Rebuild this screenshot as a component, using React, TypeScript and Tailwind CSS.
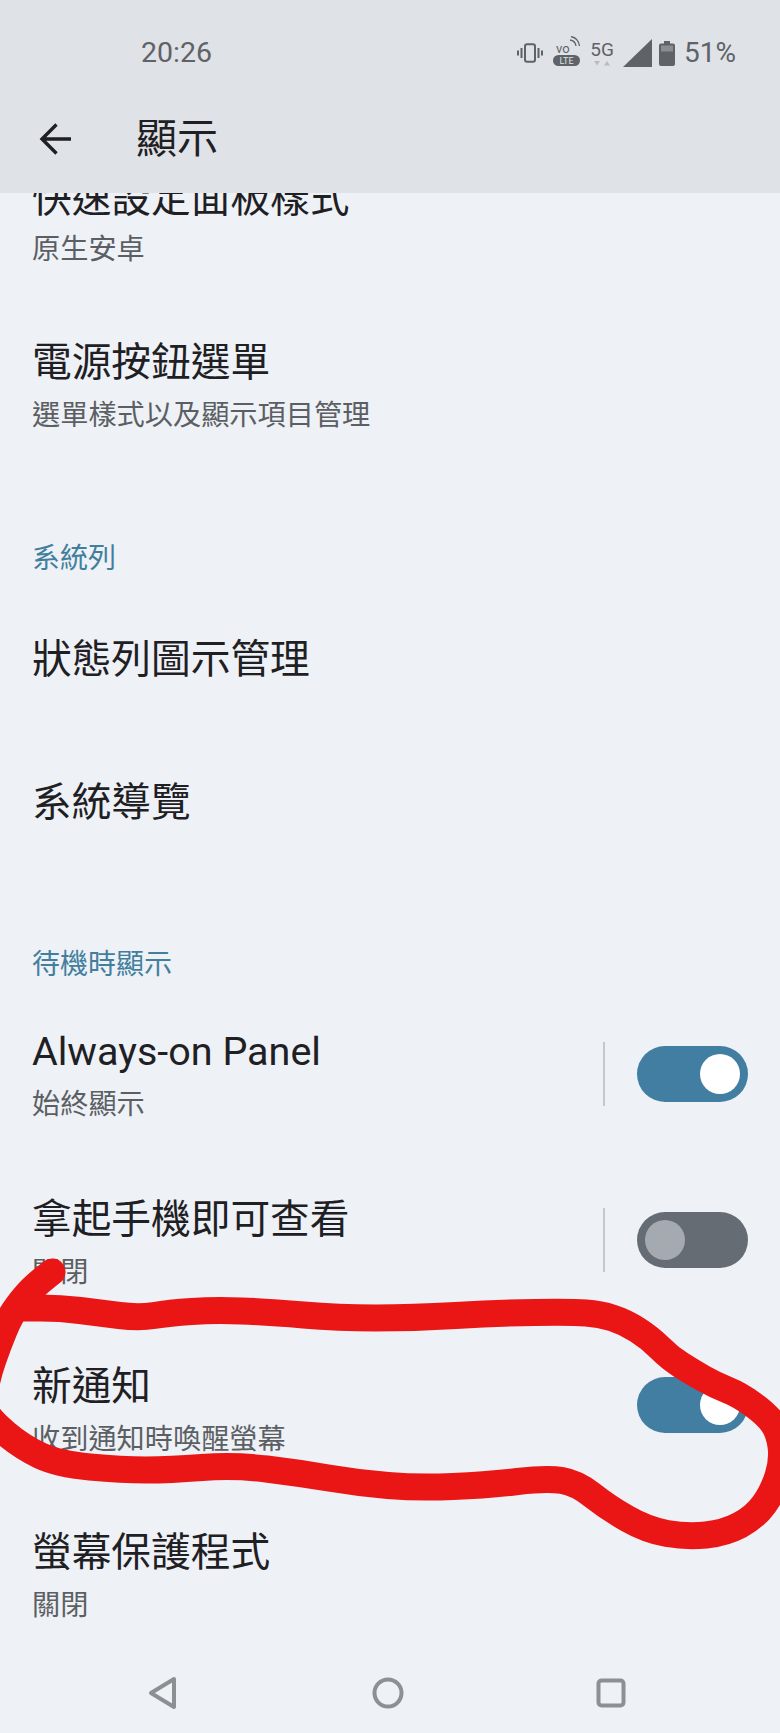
const FONT = "font-['Roboto','Noto_Sans_CJK_TC',sans-serif]";

const PTS: [number, number][] = [
  [52, 1272], [38, 1283], [25, 1296], [10, 1316], [-2, 1345], [-13, 1377], [-17, 1405], [-10, 1420], [22, 1447], [58, 1464],
  [122, 1470], [170, 1470], [234, 1465], [299, 1473], [358, 1483], [418, 1488], [488, 1485], [547, 1478], [577, 1483],
  [607, 1507], [647, 1530], [687, 1537], [725, 1533], [755, 1517], [773, 1492], [783, 1460], [779, 1432], [767, 1415],
  [740, 1395], [715, 1385], [692, 1372], [670, 1358], [650, 1338], [625, 1322], [600, 1314], [572, 1312], [498, 1313], [413, 1318], [338, 1318], [269, 1312],
  [214, 1310], [169, 1313], [139, 1318], [100, 1313], [60, 1308], [22, 1308],
];

function smooth(points: [number, number][]) {
  let d = `M${points[0][0]} ${points[0][1]}`;
  for (let i = 1; i < points.length - 1; i++) {
    const mx = (points[i][0] + points[i + 1][0]) / 2;
    const my = (points[i][1] + points[i + 1][1]) / 2;
    d += ` Q${points[i][0]} ${points[i][1]} ${mx} ${my}`;
  }
  const last = points[points.length - 1];
  return d + ` L${last[0]} ${last[1]}`;
}

function Toggle({ on, divider = true }: { on: boolean; divider?: boolean }) {
  return (
    <div className="flex items-center">
      {divider && <div className="w-[2px] h-[64px] bg-[#c4c7cb]" />}
      <div className={`ml-[32px] w-[111px] h-[56px] rounded-[28px] flex items-center ${on ? "bg-[#417ea2] justify-end pr-[8px]" : "bg-[#666c73] pl-[8px]"}`}>
        <div className={`w-[40px] h-[40px] rounded-full ${on ? "bg-white" : "bg-[#a5aab1]"}`} />
      </div>
    </div>
  );
}

function Row({ title, sub, on, divider, latin, tight, low, h = "h-[166.5px]" }: { title: string; sub: string; on?: boolean; divider?: boolean; latin?: boolean; tight?: boolean; low?: boolean; h?: string }) {
  return (
    <div className={`${h} pl-[32px] pr-[32px] flex items-start justify-between ${latin ? "pt-[29px]" : "pt-[31px]"}`}>
      <div>
        <div className={`leading-[56px] text-[#1e2023] ${tight ? "h-[55px]" : "h-[57px]"} ${latin ? "text-[39.5px]" : "text-[39.7px]"}`}>{title}</div>
        <div className="h-[48px] text-[28.2px] leading-[48px] text-[#5b5f63]">{sub}</div>
      </div>
      {on !== undefined && <div className={latin ? "pt-[18px]" : low ? "pt-[18px]" : "pt-[16px]"}><Toggle on={on} divider={divider} /></div>}
    </div>
  );
}

function Single({ title }: { title: string }) {
  return (
    <div className="h-[143px] pl-[32px] flex items-center text-[39.7px] text-[#1e2023]">{title}</div>
  );
}

function Section({ title, h }: { title: string; h: string }) {
  return (
    <div className={`${h} pl-[32px] flex items-end pb-[10px]`}>
      <div className="text-[28px] leading-[40px] text-[#437f9d]">{title}</div>
    </div>
  );
}

export default function App() {
  return (
    <div className={`relative w-[780px] h-[1733px] overflow-hidden flex flex-col bg-[#eef1f6] ${FONT}`}>
      <header className="relative z-10 h-[193px] shrink-0 bg-[#dfe2e7]">
        <div className="h-[104px] pl-[141px] pr-[44px] flex items-center justify-between pt-[2px]">
          <div className="text-[28.500px] leading-[34px] text-[#5f6266]">20:26</div>
          <div className="flex items-center text-[#5f6266]">
            <svg width="26" height="20" viewBox="0 0 26 20" fill="none">
              <rect x="8" y="1.2" width="10" height="17.6" rx="2" stroke="#5f6266" strokeWidth="2" />
              <path d="M4.5 5v10M1 7.5v5M21.5 5v10M25 7.5v5" stroke="#5f6266" strokeWidth="2" />
            </svg>
            <svg width="28" height="30" viewBox="0 0 28 30" className="ml-[10px] -mt-[4px]">
              <text x="3" y="17" fontSize="13" fill="#5f6266" fontFamily="Roboto">vo</text>
              <path d="M17 4a7 7 0 0 1 6 6M18 0.5a11 11 0 0 1 8.5 9.500" fill="none" stroke="#5f6266" strokeWidth="1.3" />
              <rect x="0" y="19" width="27" height="11" rx="5.500" fill="#5f6266" />
              <text x="13.500" y="28" fontSize="9" fill="#dfe2e7" textAnchor="middle" fontFamily="Roboto">LTE</text>
            </svg>
            <div className="ml-[10px] w-[22px] flex flex-col items-center">
              <div className="text-[19px] leading-[19px] h-[19px]">5G</div>
              <svg width="20" height="6" viewBox="0 0 20 6" className="mt-[1px]">
                <path d="M2 1h6L5 5.500zM12 5.500h6L15 1z" fill="#b9bcc0" />
              </svg>
            </div>
            <svg width="29" height="28" viewBox="0 0 29 28" className="ml-[10px]">
              <path d="M29 0V28H0Z" fill="#5f6266" />
            </svg>
            <svg width="16" height="25" viewBox="0 0 16 25" className="ml-[7px]">
              <path d="M5 0h6v2.500h3a2 2 0 0 1 2 2V23a2 2 0 0 1-2 2H2a2 2 0 0 1-2-2V4.500a2 2 0 0 1 2-2h3z" fill="#5f6266" />
              <rect x="2" y="4.500" width="12" height="6" fill="#8a8d91" />
            </svg>
            <div className="ml-[9px] text-[28px] leading-[34px]">51%</div>
          </div>
        </div>
        <div className="h-[89px] flex items-start">
          <svg width="34" height="32" viewBox="0 0 34 32" fill="none" className="ml-[39px] mt-[19px]">
            <path d="M32 16H3M17.500 1.500L3 16l14.500 14.500" stroke="#1e2023" strokeWidth="3.400" />
          </svg>
          <div className="ml-[63px] text-[41px] leading-[70px] text-[#1e2023]">顯示</div>
        </div>
      </header>

      <main className="flex-1 overflow-hidden">
        <div className="-mt-[53px]">
          <Row title="快速設定面板樣式" sub="原生安卓" h="h-[164px]" tight />
          <Row title="電源按鈕選單" sub="選單樣式以及顯示項目管理" />
          <Section title="系統列" h="h-[118px]" />
          <Single title="狀態列圖示管理" />
          <Single title="系統導覽" />
          <Section title="待機時顯示" h="h-[120px]" />
          <Row title="Always-on Panel" sub="始終顯示" on={true} latin />
          <Row title="拿起手機即可查看" sub="關閉" on={false} />
          <Row title="新通知" sub="收到通知時喚醒螢幕" on={true} divider={false} low />
          <Row title="螢幕保護程式" sub="關閉" />
        </div>
      </main>

      <nav className="absolute z-10 bottom-0 left-0 right-0 h-[80px] bg-[#eef1f6] flex items-center">
        <svg width="32" height="34" viewBox="0 0 32 34" fill="none" className="ml-[147px]">
          <path d="M27 3 L4 17 L27 31 Z" stroke="#8d9093" strokeWidth="4" strokeLinejoin="round" />
        </svg>
        <svg width="32" height="32" viewBox="0 0 32 32" fill="none" className="ml-[193px]">
          <circle cx="16" cy="16" r="13.500" stroke="#8d9093" strokeWidth="4" />
        </svg>
        <svg width="30" height="30" viewBox="0 0 30 30" fill="none" className="ml-[192px]">
          <rect x="2.500" y="2.500" width="25" height="25" rx="3" stroke="#8d9093" strokeWidth="4" />
        </svg>
      </nav>

      <svg className="absolute z-20 inset-0 pointer-events-none" width="780" height="1733" viewBox="0 0 780 1733" fill="none">
        <path d={smooth(PTS)} stroke="#ea1616" strokeWidth="27" strokeLinecap="round" strokeLinejoin="round" />
      </svg>
    </div>
  );
}
